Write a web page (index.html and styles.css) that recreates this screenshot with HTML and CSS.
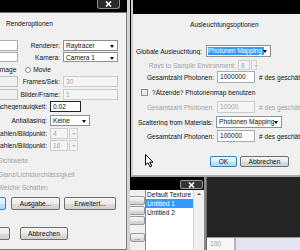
FILE: index.html
```html
<!DOCTYPE html>
<html lang="de">
<head>
  <meta charset="UTF-8">
  <title>Renderoptionen</title>
  <link rel="stylesheet" href="styles.css">
</head>
<body>
  <!-- Texturen-Fenster (hinten) -->
  <div class="win tex">
    <div class="titlebar tex-title">
      <span class="close"><svg width="9" height="6" viewBox="0 0 9 6"><path d="M2 0.5 L7 5.5 M7 0.5 L2 5.5" stroke="#fff" stroke-width="1.6"/></svg></span>
    </div>
    <div class="tex-body">
      <div class="tex-buttons">
        <span class="btn tbtn"></span>
        <span class="btn tbtn"></span>
        <span class="btn tbtn"></span>
        <span class="btn tbtn small">...</span>
      </div>
      <div class="listbox">
        <div class="item">Default Texture</div>
        <div class="item sel">Untitled 1</div>
        <div class="item">Untitled 2</div>
      </div>
      <div class="scroll"><span class="up"></span></div>
    </div>
  </div>

  <div class="viewport">
    <div class="view-dark"></div>
    <div class="view-bar">
      <span class="zoom">100</span>
      <span class="lavender"></span>
    </div>
  </div>

  <!-- Renderoptionen -->
  <div class="win render">
    <div class="titlebar">
      <span class="close"><svg width="9" height="6" viewBox="0 0 9 6"><path d="M2 0.5 L7 5.5 M7 0.5 L2 5.5" stroke="#fff" stroke-width="1.6"/></svg></span>
    </div>
    <div class="pane">
      <div class="caption cap-render">Renderoptionen</div>

      <div class="row ra">
        <span class="edit w58"></span>
        <span class="lbl w42">Renderer:</span>
        <span class="select w55">Raytracer</span>
      </div>
      <div class="row rb">
        <span class="edit w58"></span>
        <span class="lbl w42">Kamera:</span>
        <span class="select w55">Camera 1</span>
      </div>
      <div class="row rc">
        <span class="radio r-image"></span><span>Image</span>
        <span class="radio r-movie"></span><span>Movie</span>
      </div>
      <div class="row rd">
        <span class="edit blank w58"></span>
        <span class="lbl w42">Frames/Sek:</span>
        <span class="edit off w55">30</span>
      </div>
      <div class="row re">
        <span class="edit blank w58"></span>
        <span class="lbl w42">Bilder/Frame:</span>
        <span class="edit off w55">1</span>
      </div>
      <div class="row rf">
        <span class="lbl w87">Oberflächegenauigkeit:</span>
        <span class="edit dark w31">0.02</span>
      </div>
      <div class="row rg">
        <span class="lbl w87">Antialiasing:</span>
        <span class="select w40">Keine</span>
      </div>
      <div class="row rh">
        <span class="lbl w87">Min. Strahlen/Bildpunkt:</span>
        <span class="spin"><span class="edit off">4</span><span class="spinbtn"></span></span>
      </div>
      <div class="row ri">
        <span class="lbl w87">Max. Strahlen/Bildpunkt:</span>
        <span class="spin"><span class="edit off">16</span><span class="spinbtn"></span></span>
      </div>

      <div class="check-line cl1"><span class="check off"></span>Sichtweite</div>
      <div class="check-line cl2"><span class="check off"></span>Glanz/Lichtdurchlässigkeit</div>
      <div class="check-line cl3"><span class="check off"></span>Weiche Schatten</div>

      <div class="btnrow br1">
        <span class="btn b-first"></span>
        <span class="btn b-ausgabe">Ausgabe...</span>
        <span class="btn b-erw">Erweitert...</span>
      </div>
      <div class="btnrow br2">
        <span class="btn b-ok">OK</span>
        <span class="btn b-abb">Abbrechen</span>
      </div>
    </div>
  </div>

  <!-- Ausleuchtungsoptionen -->
  <div class="win light">
    <div class="titlebar light-title"></div>
    <div class="pane">
      <div class="caption cap-light">Ausleuchtungsoptionen</div>

      <div class="row q1">
        <span class="lbl w69">Globale Ausleuchtung:</span>
        <span class="select w64 gap4"><span class="hl">Photonen Mapping</span></span>
      </div>
      <div class="row q2 grey">
        <span class="lbl w103">Rays to Sample Environment:</span>
        <span class="spin s19 gap2"><span class="edit off">8</span><span class="spinbtn"></span></span>
      </div>
      <div class="row q3">
        <span class="lbl w81">Gesamtzahl Photonen:</span>
        <span class="edit w38 gap3">1000000</span>
        <span class="hint"># des geschätzten Wertes</span>
      </div>
      <div class="row q4">
        <span class="check"></span><span>?Ätzende? Photonenmap benutzen</span>
      </div>
      <div class="row q5 grey">
        <span class="lbl w81">Gesamtzahl Photonen:</span>
        <span class="edit off w38 gap3">10000</span>
        <span class="hint"># des geschätzten Wertes</span>
      </div>
      <div class="row q6">
        <span class="lbl w80">Scattering from Materials:</span>
        <span class="select w66 gap3">Photonen Mapping</span>
      </div>
      <div class="row q7">
        <span class="lbl w81">Gesamtzahl Photonen:</span>
        <span class="edit w38 gap3">100000</span>
        <span class="hint"># des geschätzten Wertes</span>
      </div>

      <div class="btnrow q8">
        <span class="btn focus l-ok">OK</span>
        <span class="btn l-abb">Abbrechen</span>
      </div>
    </div>
  </div>

  <svg class="cursor" width="10" height="14" viewBox="0 0 10 14">
    <path d="M0.5 0.5 L0.5 11 L3 8.7 L5 12.8 L6.7 12 L4.8 8.2 L8 8.2 Z" fill="#fff" stroke="#000" stroke-width="1"/>
  </svg>
</body>
</html>
```

FILE: styles.css
```css
* {
  box-sizing: border-box;
}
body {
  margin: 0;
  width: 300px;
  height: 250px;
  overflow: hidden;
  position: relative;
  background: #000;
  font-family: 'Liberation Sans', Arial, sans-serif;
  font-size: 6.6px;
  color: #111;
}

/* windows */
.win {
  position: absolute;
  background: #f0f0f0;
}
.titlebar {
  position: relative;
  background: #000;
}
.close {
  position: absolute;
  top: 0;
  right: 7px;
  width: 23px;
  height: 9px;
  background: #2a2a2a;
  border: 1px solid #8d8d8d;
  border-top: none;
  border-radius: 0 0 3px 3px;
  display: flex;
  align-items: center;
  justify-content: center;
}
.pane {
  position: relative;
}
.caption {
  height: 10px;
  line-height: 10px;
}
.row {
  display: flex;
  align-items: center;
  height: 11px;
  white-space: nowrap;
}
.lbl {
  flex: none;
  display: flex;
  justify-content: flex-end;
  overflow: hidden;
}
.grey, .check-line {
  color: #a3a3a3;
}
.hint {
  margin-left: 4px;
}

/* controls */
.edit, .select {
  flex: none;
  height: 100%;
  line-height: 10px;
  padding-left: 2px;
  background: #fff;
  border: 1px solid #a5acb5;
  overflow: hidden;
}
.edit.off {
  background: #f4f4f4;
  border-color: #c9ccd1;
  color: #a6a6a6;
}
.edit.blank {
  background: #f0f0f0;
  border-color: #bfc3c8;
}
.edit.dark {
  border-color: #222;
}
.select {
  position: relative;
  border-color: #8d9096;
}
.select::after {
  content: '';
  position: absolute;
  right: 3px;
  top: 4px;
  border-left: 2.5px solid transparent;
  border-right: 2.5px solid transparent;
  border-top: 3px solid #111;
}
.hl {
  display: block;
  margin: 1px 6px 1px -1px;
  height: 8px;
  line-height: 8px;
  letter-spacing: -0.1px;
  background: #3399ff;
  color: #fff;
  overflow: hidden;
}
.spin {
  flex: none;
  display: flex;
  height: 100%;
  width: 28px;
}
.spin .edit {
  width: 18px;
}
.spinbtn {
  flex: 1;
  margin-left: 1px;
  border: 1px solid #d3d3d3;
  background: #f2f2f2;
  position: relative;
}
.spinbtn::after {
  content: '';
  position: absolute;
  left: 2px;
  top: 4px;
  border-left: 2px solid transparent;
  border-right: 2px solid transparent;
  border-top: 2px solid #bdbdbd;
}
.s19 {
  width: 19px;
}
.s19 .edit {
  width: 12px;
}
.radio {
  flex: none;
  width: 6px;
  height: 6px;
  border-radius: 50%;
  border: 1px solid #8f8f8f;
  background: #f6f6f6;
  margin-right: 2px;
}
.check {
  flex: none;
  display: inline-block;
  width: 7px;
  height: 7px;
  border: 1px solid #8e8f8f;
  background: #e9e9e9;
  margin-right: 4px;
}
.check.off {
  border-color: #c4c4c4;
  background: #f3f3f3;
}
.btn {
  flex: none;
  display: flex;
  align-items: center;
  justify-content: center;
  height: 100%;
  border: 1px solid #707070;
  border-radius: 2px;
  background: linear-gradient(#f4f4f4, #ebebeb 50%, #dddddd 51%, #cfcfcf);
  color: #111;
}
.btn.focus {
  border-color: #3c7fb1;
  background: linear-gradient(#eaf6fd, #d9f0fc 50%, #bee6fd 51%, #a7d9f5);
}
.btnrow {
  display: flex;
}

/* widths */
.w31 { width: 31px; }
.w38 { width: 38px; }
.w40 { width: 40px; }
.w42 { width: 42px; margin-right: 3px; }
.w55 { width: 55px; }
.w58 { width: 58px; margin-left: 20px; }
.w64 { width: 65px; }
.w66 { width: 66px; }
.w69 { width: 69px; }
.w80 { width: 80px; }
.w81 { width: 81px; }
.w87 { width: 87px; margin-left: 20px; margin-right: 3px; }
.w103 { width: 103px; }
.gap2 { margin-left: 2px; }
.gap3 { margin-left: 3px; }
.gap4 { margin-left: 4px; }

/* Renderoptionen */
.render {
  left: -60px;
  top: 0;
  width: 190px;
  height: 250px;
  border-right: 3px solid #d4d4d4;
  z-index: 2;
}
.render .titlebar {
  height: 13px;
  border-bottom: 1px solid #6f6f6f;
}
.render .pane {
  height: 237px;
  padding-top: 6px;
  border-right: 1px solid #7d7d7d;
  border-bottom: 1px solid #7d7d7d;
}
.cap-render { margin-left: 66px; }
.ra { margin-top: 11px; }
.rb { margin-top: 1px; height: 10px; }
.rc { margin-top: 2px; }
.rd { margin-top: 1px; }
.re { margin-top: 2px; }
.rf { margin-top: 1px; }
.rg { margin-top: 3px; }
.rh { margin-top: 2px; }
.ri { margin-top: 1px; }
.r-image { margin-left: 50px; }
.r-movie { margin-left: 9px; }
.check-line {
  display: flex;
  align-items: center;
  height: 10px;
  padding-left: 50px;
  white-space: nowrap;
}
.check-line .check { margin-right: 1px; visibility: hidden; }
.cl1 { margin-top: 4px; }
.cl2 { margin-top: 4px; }
.cl3 { margin-top: 3px; }
.br1 { height: 13px; margin-top: 5px; }
.br2 { height: 13px; margin-top: 17px; }
.b-first {
  width: 66px;
  border-color: #3c7fb1;
  background: linear-gradient(#eaf6fd, #d9f0fc 50%, #bee6fd 51%, #a7d9f5);
}
.b-ausgabe { width: 49px; margin-left: 5px; }
.b-erw { width: 52px; margin-left: 4px; }
.b-ok { width: 50px; margin-left: 20px; }
.b-abb { width: 48px; margin-left: 10px; }

/* Ausleuchtungsoptionen */
.light {
  left: 131px;
  top: 0;
  width: 175px;
  height: 177px;
  border-left: 2px solid #cfcfcf;
  border-bottom: 2px solid #a9a9a9;
  z-index: 3;
}
.light-title {
  height: 14px;
}
.light .pane {
  padding-top: 6px;
}
.cap-light { margin-left: 57px; }
.q1 { margin-top: 15px; height: 12px; }
.q2 { margin-top: 3px; height: 10px; }
.q3 { margin-top: 1px; height: 12px; }
.q4 { margin-top: 5px; height: 9px; padding-left: 8px; }
.q5 { margin-top: 4px; height: 12px; }
.q6 { margin-top: 3px; height: 12px; }
.q7 { margin-top: 2px; height: 12px; }
.q8 { margin-top: 14px; height: 11px; }
.l-ok { width: 27px; margin-left: 77px; }
.l-abb { width: 49px; margin-left: 3px; }

/* Texturen */
.tex {
  left: 60px;
  top: 177px;
  width: 146px;
  height: 73px;
  border-right: 2px solid #8a8a8a;
  z-index: 1;
}
.tex-title {
  height: 13px;
}
.tex-title .close {
  right: 1px;
  top: 3px;
  height: 9px;
  background: #333;
  border: 1px solid #9a9a9a;
  border-radius: 2px;
}
.tex-body {
  display: flex;
  height: 60px;
}
.tex-buttons {
  width: 85px;
  display: flex;
  flex-direction: column;
  align-items: flex-end;
  padding-top: 6px;
}
.tbtn {
  width: 40px;
  height: 9px;
  margin-bottom: 1px;
  border-color: #9a9a9a;
}
.tbtn.small {
  width: 15px;
  margin-top: 7px;
  font-size: 6px;
}
.listbox {
  width: 48px;
  background: #fff;
  border-left: 1px solid #828790;
}
.item {
  height: 9px;
  line-height: 9px;
  padding-left: 1px;
  white-space: nowrap;
}
.item.sel {
  background: #3399ff;
  color: #fff;
}
.scroll {
  flex: 1;
  position: relative;
  background: #f0f0f0;
  border-left: 1px solid #d8d8d8;
}
.up {
  position: absolute;
  left: 3px;
  top: 3px;
  border-left: 2px solid transparent;
  border-right: 2px solid transparent;
  border-bottom: 2px solid #555;
}

/* 3D-Ansicht */
.viewport {
  position: absolute;
  left: 206px;
  top: 177px;
  width: 94px;
  height: 73px;
  display: flex;
  flex-direction: column;
  background: #242424;
  border-left: 1px solid #6a6a6a;
}
.view-dark {
  flex: 1;
}
.view-bar {
  height: 13px;
  display: flex;
  border-top: 1px solid #9a9a9a;
}
.zoom {
  width: 29px;
  padding-left: 3px;
  line-height: 12px;
  background: #f7f7f7;
  color: #9a9a9a;
  border-right: 2px solid #b5b5b5;
}
.lavender {
  flex: 1;
  background: #e4e4f4;
}

.cursor {
  position: absolute;
  left: 145px;
  top: 154px;
  z-index: 9;
}
```
